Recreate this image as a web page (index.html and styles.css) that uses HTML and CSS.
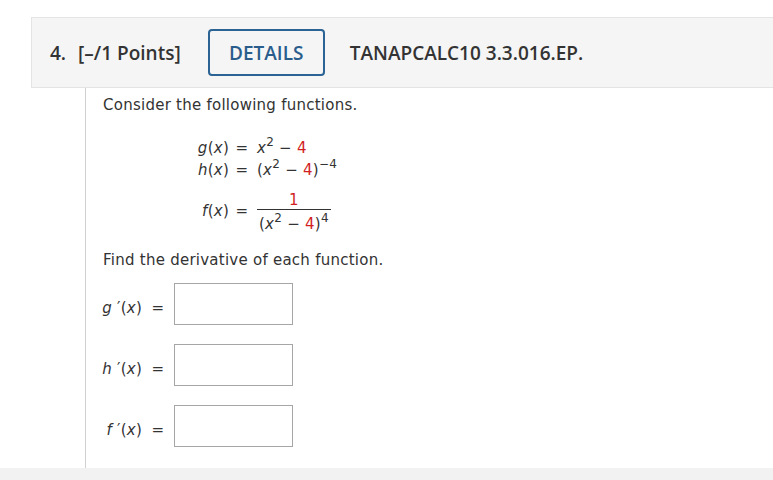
FILE: index.html
```html
<!DOCTYPE html>
<html lang="en">
<head>
  <meta charset="UTF-8">
  <meta name="viewport" content="width=device-width, initial-scale=1.0">
  <title>Question 4</title>
  <link rel="stylesheet" href="styles.css">
</head>
<body>
  <div class="question">
    <div class="q-head">
      <span class="q-num">4.</span>
      <span class="q-points">[&ndash;/1 Points]</span>
      <button class="details">DETAILS</button>
      <span class="q-code">TANAPCALC10 3.3.016.EP.</span>
    </div>

    <div class="q-body">
      <p class="prompt">Consider the following functions.</p>

      <div class="eqs">
        <span class="lbl"><i>g</i>(<i>x</i>)</span>
        <span class="eq">=</span>
        <span class="expr"><i>x</i><sup>2</sup> &minus; <span class="red">4</span></span>

        <span class="lbl"><i>h</i>(<i>x</i>)</span>
        <span class="eq">=</span>
        <span class="expr">(<i>x</i><sup>2</sup> &minus; <span class="red">4</span>)<sup>&minus;4</sup></span>

        <span class="lbl frac-row"><i>f</i>(<i>x</i>)</span>
        <span class="eq frac-row">=</span>
        <span class="expr frac-row">
          <span class="frac">
            <span class="num red">1</span>
            <span class="den">(<i>x</i><sup>2</sup> &minus; <span class="red">4</span>)<sup>4</sup></span>
          </span>
        </span>
      </div>

      <p class="prompt find">Find the derivative of each function.</p>

      <div class="answer">
        <span class="a-lbl"><i>g</i> &#8242;(<i>x</i>)</span>
        <span class="a-eq">=</span>
        <input class="a-box" type="text">
      </div>
      <div class="answer">
        <span class="a-lbl"><i>h</i> &#8242;(<i>x</i>)</span>
        <span class="a-eq">=</span>
        <input class="a-box" type="text">
      </div>
      <div class="answer">
        <span class="a-lbl"><i>f</i> &#8242;(<i>x</i>)</span>
        <span class="a-eq">=</span>
        <input class="a-box" type="text">
      </div>
    </div>
  </div>
  <div class="strip"></div>
</body>
</html>
```

FILE: styles.css
```css
body {
  margin: 0;
  padding: 17px 0 0 0;
  background-color: #ffffff;
  color: #333333;
  font-family: "DejaVu Sans", Verdana, sans-serif;
  font-size: 15px;
  letter-spacing: 0.25px;
}
.question {
  margin-left: 31px;
}
.q-head {
  display: flex;
  align-items: center;
  height: 69px;
  padding-left: 18px;
  background-color: #f5f5f5;
  border: 1px solid #e4e4e4;
  border-right: none;
  font-family: "Open Sans", sans-serif;
  font-size: 19px;
  font-weight: 600;
  letter-spacing: 0;
  color: #333333;
}
.q-num {
  margin-right: 12px;
}
.q-points {
  margin-right: 27px;
}
.details {
  width: 117px;
  height: 47px;
  margin-right: 25px;
  background: transparent;
  border: 2px solid #2b6394;
  border-radius: 4px;
  font-family: "Open Sans", sans-serif;
  font-size: 19px;
  font-weight: 600;
  color: #2a5d8c;
  padding: 0;
}
.q-body {
  margin-left: 54px;
  border-left: 1px solid #d0d0d0;
  padding: 8px 0 21px 17px;
  background: #ffffff;
}
.prompt {
  margin: 0;
  line-height: 18px;
}
.red {
  color: #d11f1f;
}
.eqs {
  display: grid;
  grid-template-columns: 40px 26px auto;
  align-items: center;
  margin: 23px 0 0 86px;
  line-height: 22px;
}
.lbl {
  text-align: right;
}
.eq {
  text-align: center;
}
.expr {
  padding-left: 2px;
}
sup {
  font-size: 12px;
  line-height: 0;
  vertical-align: 7px;
}
.frac-row {
  margin-top: 7px;
}
.frac {
  display: inline-flex;
  flex-direction: column;
  align-items: center;
  vertical-align: middle;
}
.num {
  line-height: 18px;
  padding-top: 3px;
  border-bottom: 1px solid #333333;
  align-self: stretch;
  text-align: center;
}
.den {
  line-height: 20px;
  padding: 4px 2px 0 2px;
}
.find {
  margin-top: 17px;
}
.answer {
  display: flex;
  align-items: center;
  margin-left: -15px;
  margin-top: 14px;
}
.answer + .answer {
  margin-top: 19px;
}
.a-lbl {
  width: 54px;
  text-align: right;
  padding-top: 8px;
}
.a-eq {
  width: 32px;
  text-align: center;
  padding-top: 8px;
}
.a-box {
  box-sizing: border-box;
  width: 119px;
  height: 42px;
  margin: 0;
  border: 1px solid #a6a6a6;
  background: #ffffff;
}
.strip {
  height: 20px;
  background-color: #f2f2f2;
}
```
